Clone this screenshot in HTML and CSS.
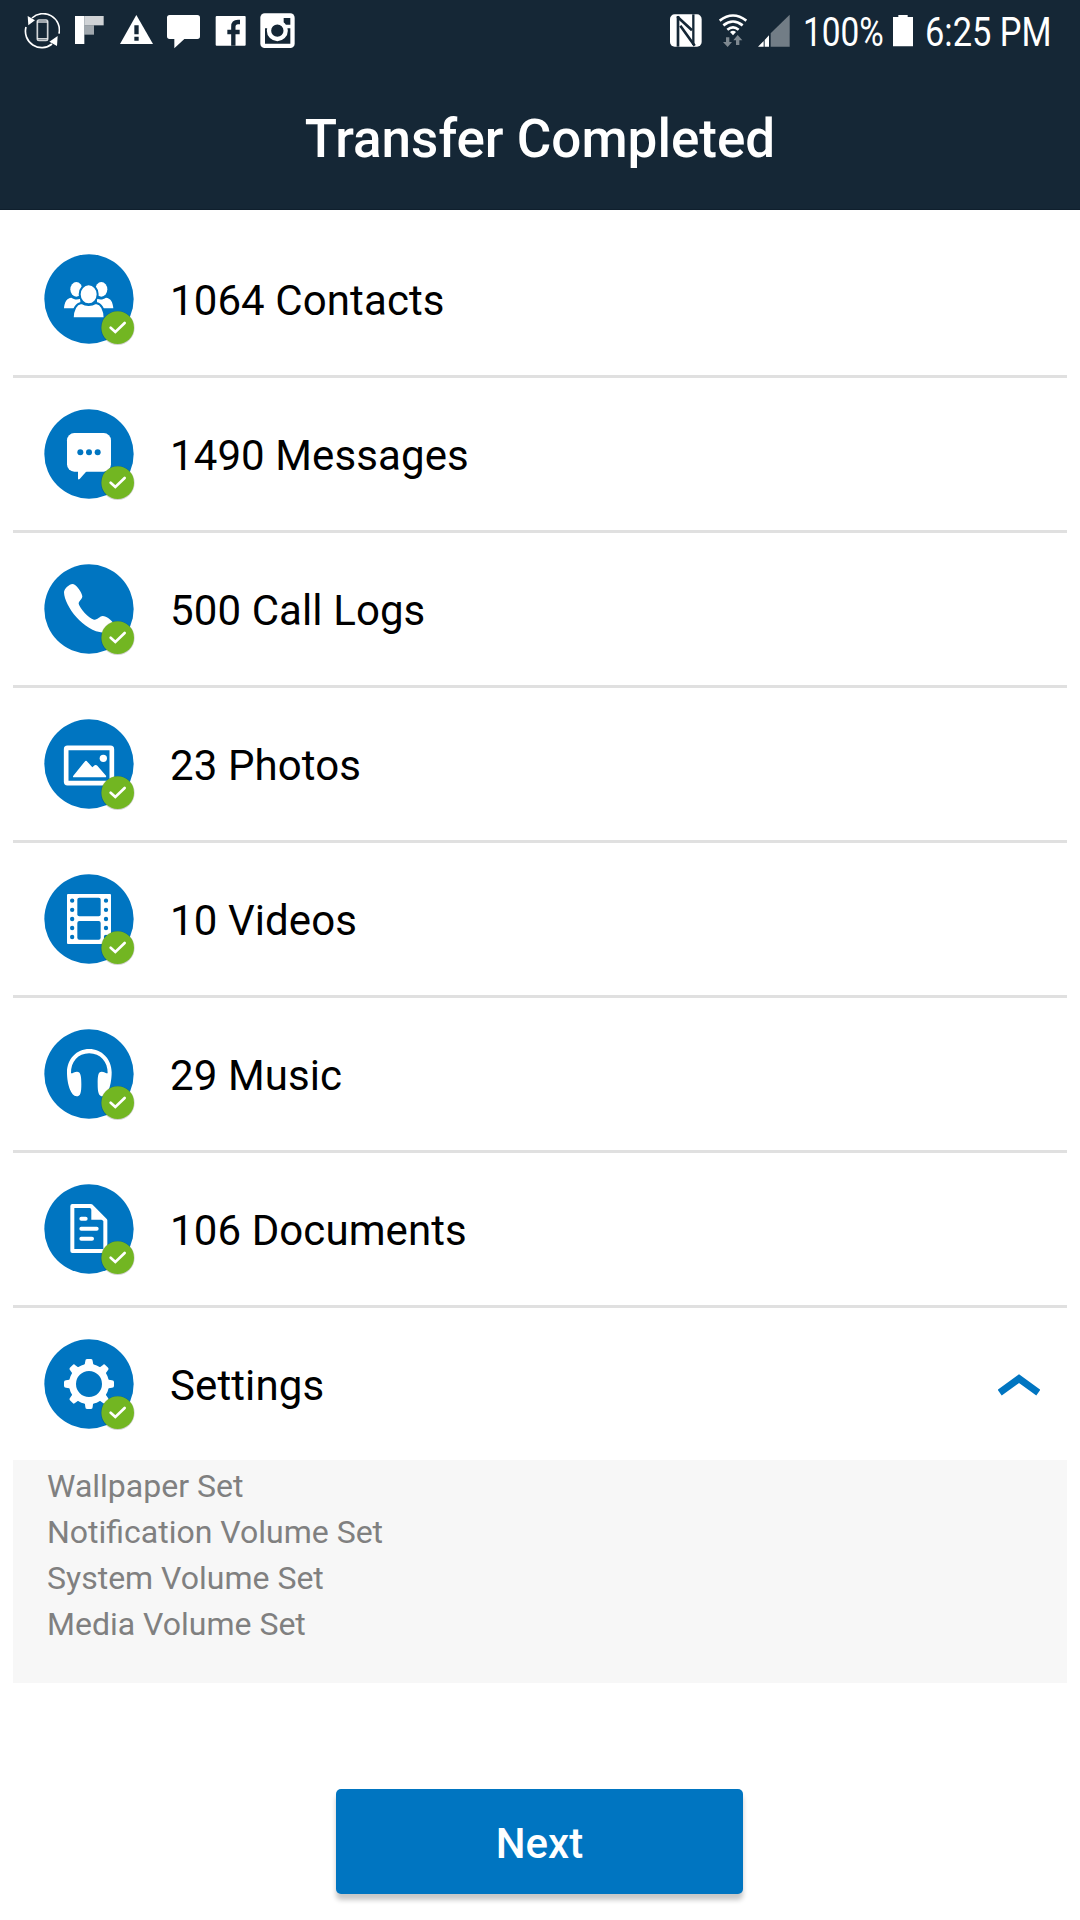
FILE: index.html
```html
<!DOCTYPE html>
<html lang="en">
<head>
    <meta charset="UTF-8">
    <meta name="viewport" content="width=device-width, initial-scale=1.0">
    <title>Transfer Completed</title>
    <link rel="stylesheet" href="styles.css">
</head>
<body>
<svg class="defs" width="0" height="0">
    <symbol id="badge" viewBox="0 0 276 276">
        <circle cx="221" cy="222" r="51" fill="#000" opacity="0.18"/>
        <circle cx="221" cy="221" r="49" fill="#72b622"/>
        <path d="M200 221l14 13 28-27" fill="none" stroke="#fff" stroke-width="8" stroke-linecap="round"/>
    </symbol>
    <path id="tooth" d="M117 86q7-10 7-20 0-6 5-6h12q5 0 5 6 0 10 7 20z"/>
</svg>
<header>
    <div class="status-bar">
        <div class="notifications">
            <svg viewBox="0 0 108 108">
                <g fill="none" stroke="#fff">
                    <path d="M105 62A49 49 0 0 0 24 15M6 42A49 49 0 0 0 84 93" stroke-width="5"/>
                    <rect x="40" y="21" width="31" height="61" rx="5" stroke-width="5" opacity="0.8"/>
                    <path d="M40 27h31M40 77h31" stroke-width="4" opacity="0.8"/>
                </g>
                <path d="M11 9l22 13-20 15zM101 69l-2 30-23-13z" fill="#fff"/>
            </svg>
            <svg viewBox="0 0 108 108" fill="#fff">
                <path d="M12 9h28v84H12z"/>
                <path d="M40 9h58v28H40z" opacity="0.8"/>
                <path d="M40 37h29v28H40z" opacity="0.6"/>
            </svg>
            <svg viewBox="0 0 108 108">
                <path d="M55 6l50 87H6z" fill="#fff"/>
                <path d="M49 37h13v27H49zM49 71h13v12H49z" fill="#152736"/>
            </svg>
            <svg viewBox="0 0 108 108" fill="#fff">
                <path d="M14 6h83q8 0 8 8v56q0 8-8 8H58l-30 28V78H14q-8 0-8-8V14q0-8 8-8z"/>
            </svg>
            <svg viewBox="0 0 108 108">
                <rect x="11" y="9" width="90" height="89" rx="3" fill="#fff"/>
                <path d="M64 98V41q0-14 14-14h6M46 57h37" fill="none" stroke="#152736" stroke-width="13"/>
            </svg>
            <svg viewBox="0 0 108 108">
                <rect x="4" y="1" width="103" height="104" rx="13" fill="#fff"/>
                <path d="M18 46h76v46H18zM74 15h20v20H74z" fill="#152736"/>
                <circle cx="55" cy="53" r="25" fill="#152736" stroke="#fff" stroke-width="13"/>
            </svg>
        </div>
        <div class="system">
            <svg class="nfc" viewBox="0 0 96 108">
                <rect x="0" y="4" width="95" height="97" rx="14" fill="#fff"/>
                <g fill="none" stroke="#152736">
                    <path d="M24 9v92" stroke-width="8"/>
                    <path d="M70 4v92" stroke-width="7"/>
                    <path d="M22 11l44 41M31 38l43 60" stroke-width="8"/>
                </g>
            </svg>
            <svg class="wifi" viewBox="0 0 84 108">
                <g fill="none" stroke="#fff" stroke-width="8">
                    <path d="M2 23Q42-8 82 23M13 37Q42 14 71 37M25 50Q42 36 59 50"/>
                </g>
                <path d="M33 57q9-7 18 0l-9 10z" fill="#fff"/>
                <path d="M21 73h10v14h8L26 102 12 87h9zM51 96h10V82h9L56 66 43 82h8z" fill="#fff" opacity="0.45"/>
            </svg>
            <svg class="signal" viewBox="0 0 96 108">
                <path d="M95 5v96H38V61z" fill="#fff" opacity="0.4"/>
                <path d="M0 101l17-17v17zM20 81l13-14v34H20z" fill="#fff"/>
            </svg>
            <span class="percent">100%</span>
            <svg class="battery" viewBox="0 0 60 108" fill="#fff">
                <path d="M16 6h28v6h16v88H0V12h16z"/>
            </svg>
            <span class="time">6:25 PM</span>
        </div>
    </div>
    <h1>Transfer Completed</h1>
</header>
<div class="list">
    <div class="item">
        <svg class="icon" viewBox="0 0 276 276" fill="#fff">
            <circle cx="135" cy="135" r="134" fill="#0075c1"/>
            <ellipse cx="97" cy="106" rx="18" ry="22"/>
            <ellipse cx="172" cy="106" rx="18" ry="22"/>
            <path d="M60 163c1-19 9-31 22-32 9 6 17 7 27 3v29zM208 163c-1-19-9-31-22-32-9 6-17 7-27 3v29z"/>
            <g stroke="#0075c1" stroke-width="6">
                <path d="M86 193c1-26 8-43 26-46 14 8 30 8 44 0 18 3 25 20 26 46z"/>
                <ellipse cx="134" cy="121" rx="27" ry="30"/>
            </g>
            <use href="#badge"/>
        </svg>
        <span>1064 Contacts</span>
    </div>
    <div class="item">
        <svg class="icon" viewBox="0 0 276 276" fill="#fff">
            <circle cx="135" cy="135" r="134" fill="#0075c1"/>
            <rect x="69" y="72" width="132" height="116" rx="22"/>
            <path d="M102 185v24q1 4 5 1l22-25z"/>
            <g fill="#0075c1">
                <circle cx="109" cy="130" r="9"/>
                <circle cx="135" cy="130" r="9"/>
                <circle cx="161" cy="130" r="9"/>
            </g>
            <use href="#badge"/>
        </svg>
        <span>1490 Messages</span>
    </div>
    <div class="item">
        <svg class="icon" viewBox="0 0 276 276" fill="#fff">
            <circle cx="135" cy="135" r="134" fill="#0075c1"/>
            <path d="M85 60C77 60 60 74 60 85c1 42 60 118 118 121h30l2-26c-8-12-22-24-34-24-9 0-14 12-26 11-17-4-42-34-46-48 0-8 11-13 11-22-1-12-19-37-30-37z"/>
            <use href="#badge"/>
        </svg>
        <span>500 Call Logs</span>
    </div>
    <div class="item">
        <svg class="icon" viewBox="0 0 276 276" fill="#fff">
            <circle cx="135" cy="135" r="134" fill="#0075c1"/>
            <rect x="66.500" y="86.500" width="137" height="106" rx="4" fill="none" stroke="#fff" stroke-width="14"/>
            <path d="M88 170l34-42q4-5 8 0l15 17 7-6q4-3 8 1l26 30q2 5-3 5H90q-5 0-2-5z"/>
            <circle cx="178" cy="118" r="11"/>
            <use href="#badge"/>
        </svg>
        <span>23 Photos</span>
    </div>
    <div class="item">
        <svg class="icon" viewBox="0 0 276 276" fill="#fff">
            <circle cx="135" cy="135" r="134" fill="#0075c1"/>
            <rect x="69" y="60" width="132" height="150" rx="3"/>
            <g fill="#0075c1">
                <rect x="100" y="71" width="70" height="56" rx="6"/>
                <rect x="100" y="141" width="70" height="56" rx="6"/>
            </g>
            <path d="M84.500 80v.1M84.500 107.500v.1M84.500 135v.1M84.500 162v.1M84.500 189v.1M186 80v.1M186 107.500v.1M186 135v.1M186 162v.1M186 189v.1" stroke="#0075c1" stroke-width="13" stroke-linecap="round"/>
            <use href="#badge"/>
        </svg>
        <span>10 Videos</span>
    </div>
    <div class="item">
        <svg class="icon" viewBox="0 0 276 276" fill="#fff">
            <circle cx="135" cy="135" r="134" fill="#0075c1"/>
            <path d="M69 130c0-40 29-70 66.500-70S203 90 203 130c0 36-11 72-27 72-12 0-15-12-15-37 0-24 1-37 12-37 7 0 12 5 18 5 1-34-22-60-55.500-60S80 99 81 133c6 0 11-5 18-5 11 0 13 13 13 37 0 25-2 37-14 37-17 0-29-36-29-72z"/>
            <use href="#badge"/>
        </svg>
        <span>29 Music</span>
    </div>
    <div class="item">
        <svg class="icon" viewBox="0 0 276 276" fill="#fff">
            <circle cx="135" cy="135" r="134" fill="#0075c1"/>
            <path d="M85 66h56l43 43v92H85z" fill="none" stroke="#fff" stroke-width="12" stroke-linejoin="round"/>
            <path d="M142 64v43h45z"/>
            <path d="M112 104h13M112 134h46M112 164h32" stroke="#fff" stroke-width="12" stroke-linecap="round"/>
            <use href="#badge"/>
        </svg>
        <span>106 Documents</span>
    </div>
    <div class="item">
        <svg class="icon" viewBox="0 0 276 276" fill="#fff">
            <circle cx="135" cy="135" r="134" fill="#0075c1"/>
            <circle cx="135" cy="135" r="49.500" fill="none" stroke="#fff" stroke-width="21"/>
            <use href="#tooth"/>
            <use href="#tooth" transform="rotate(45 135 135)"/>
            <use href="#tooth" transform="rotate(90 135 135)"/>
            <use href="#tooth" transform="rotate(135 135 135)"/>
            <use href="#tooth" transform="rotate(180 135 135)"/>
            <use href="#tooth" transform="rotate(225 135 135)"/>
            <use href="#tooth" transform="rotate(270 135 135)"/>
            <use href="#tooth" transform="rotate(315 135 135)"/>
            <use href="#badge"/>
        </svg>
        <span>Settings</span>
        <svg class="arrow" viewBox="0 0 126 66">
            <path d="M5 56L63 14l58 42" fill="none" stroke="#0075c1" stroke-width="21"/>
        </svg>
    </div>
    <div class="details">
        <p>Wallpaper Set</p>
        <p>Notification Volume Set</p>
        <p>System Volume Set</p>
        <p>Media Volume Set</p>
    </div>
</div>
<button>Next</button>
</body>
</html>
```
FILE: styles.css
```css
* {
    box-sizing: border-box;
}
body {
    font-family: Roboto, sans-serif;
    background: #fff;
    color: #000;
    width: 1080px;
    height: 1920px;
    margin: 0;
    overflow: hidden;
}
svg {
    display: block;
    flex-shrink: 0;
}
.defs {
    position: absolute;
}
header {
    background: #152736;
    color: white;
    height: 210px;
    border-bottom: 1px solid #0f1f2d;
}
.status-bar {
    display: flex;
    justify-content: space-between;
    height: 64px;
    padding: 13px 27px 0 24px;
}
.notifications {
    display: flex;
    gap: 11px;
}
.notifications svg {
    width: 36px;
    height: 36px;
}
.system {
    display: flex;
    width: 383px;
    font-size: 40px;
    line-height: 40px;
    white-space: nowrap;
}
.system svg {
    height: 36px;
}
.nfc {
    width: 32px;
}
.wifi {
    width: 28px;
    margin-left: 17px;
}
.signal {
    width: 32px;
    margin-left: 11px;
}
.percent {
    width: 80px;
    margin-left: 13px;
    transform: scaleX(0.835);
    transform-origin: left;
}
.battery {
    width: 20px;
    margin-left: 10px;
}
.time {
    width: 126px;
    margin-left: 12px;
    transform: scaleX(0.86);
    transform-origin: left;
}
h1 {
    margin: 0;
    font-size: 53px;
    font-weight: 500;
    line-height: 62px;
    padding-top: 44px;
    text-align: center;
}
.list {
    margin: 13px 13px 0;
}
.item {
    display: flex;
    align-items: center;
    height: 155px;
    padding: 0 27px 0 31px;
    border-bottom: 3px solid #e0e0e0;
    font-size: 42px;
    letter-spacing: 0.1px;
}
.item:nth-child(8) {
    height: 152px;
    border-bottom: none;
}
.item span {
    margin: 2px 0 0 34px;
}
.icon {
    width: 92px;
    height: 92px;
    margin-top: 2px;
}
.arrow {
    width: 42px;
    height: 22px;
    margin: 2px 0 0 auto;
}
.details {
    height: 223px;
    padding: 3px 34px;
    background: #f7f7f7;
    color: #808080;
    font-size: 32px;
    line-height: 46px;
}
.details p {
    margin: 0;
}
button {
    display: block;
    width: 407px;
    height: 105px;
    margin: 106px 0 0 336px;
    background: #0075c1;
    color: white;
    font-family: Roboto, sans-serif;
    font-size: 42px;
    font-weight: 500;
    padding: 4px 0 0;
    border: none;
    border-radius: 5px;
    box-shadow: 0 6px 5px rgba(0, 0, 0, 0.22);
}
```
